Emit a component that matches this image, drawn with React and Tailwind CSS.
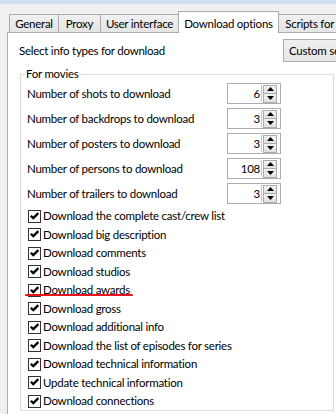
import React from "react";

const tabs = [
  { label: "General", w: "w-[50px]" },
  { label: "Proxy", w: "w-[43px]" },
  { label: "User interface", w: "w-[79px]" },
  { label: "Download options", w: "w-[101px]", active: true },
  { label: "Scripts for movies", w: "w-[100px]" },
];

const spins = [
  { label: "Number of shots to download", value: 6 },
  { label: "Number of backdrops to download", value: 3 },
  { label: "Number of posters to download", value: 3 },
  { label: "Number of persons to download", value: 108 },
  { label: "Number of trailers to download", value: 3 },
];

const checks = [
  "Download the complete cast/crew list",
  "Download big description",
  "Download comments",
  "Download studios",
  "Download awards",
  "Download gross",
  "Download additional info",
  "Download the list of episodes for series",
  "Download technical information",
  "Update technical information",
  "Download connections",
];

function Tick() {
  return (
    <span className="w-[13px] h-[13px] border border-[#333333] bg-white flex items-center justify-center shrink-0">
      <svg width="11" height="11" viewBox="0 0 11 11">
        <path d="M1 5.5 L2.6 3.9 L4.3 5.6 L8.5 1.3 L10.1 2.9 L4.3 8.8 Z" fill="#000" />
      </svg>
    </span>
  );
}

function SpinEdit({ value }) {
  return (
    <div className="w-[54px] h-[21px] border border-[#abadb3] bg-white flex items-center shrink-0">
      <span className="flex-1 text-right pr-[1px] leading-none">{value}</span>
      <span className="w-px h-[17px] bg-[#c8c8c8]" />
      <div className="ml-px mr-[3px] w-[14px] h-[18px] flex flex-col">
        <div className="h-[9px] border border-[#acacac] bg-gradient-to-b from-[#f2f2f2] to-[#e0e0e0] flex items-center justify-center">
          <svg width="7" height="4" viewBox="0 0 7 4">
            <path d="M0 4 L3.5 0 L7 4 Z" fill="#000" />
          </svg>
        </div>
        <div className="h-[9px] border border-t-0 border-[#acacac] bg-gradient-to-b from-[#f2f2f2] to-[#e0e0e0] flex items-center justify-center">
          <svg width="7" height="4" viewBox="0 0 7 4">
            <path d="M0 0 L7 0 L3.5 4 Z" fill="#000" />
          </svg>
        </div>
      </div>
    </div>
  );
}

export default function App() {
  return (
    <div className="w-[336px] h-[414px] overflow-hidden bg-[#f0f0f0] flex flex-col font-['Lato',sans-serif] text-[11.5px] tracking-[-0.25px] text-black">
      <div className="h-[4px] bg-[#cfe0f3] shrink-0" />

      {/* Tabs */}
      <div className="h-[28px] flex items-end pl-[9px] shrink-0">
        {tabs.map((t) =>
          t.active ? (
            <div
              key={t.label}
              className={`${t.w} h-[22px] -mb-px -ml-px relative z-10 bg-white border border-b-0 border-[#acacac] flex items-start justify-center pt-[3px] shrink-0 whitespace-nowrap`}
            >
              {t.label}
            </div>
          ) : (
            <div
              key={t.label}
              className={`${t.w} h-[18px] -ml-px first:ml-0 bg-gradient-to-b from-[#f0f0f0] to-[#e5e5e5] border border-b-0 border-[#acacac] flex items-center justify-center shrink-0 whitespace-nowrap overflow-hidden`}
            >
              {t.label}
            </div>
          )
        )}
      </div>

      {/* Page */}
      <div className="ml-[7px] w-[340px] flex-1 bg-white border-l border-t border-[#acacac] overflow-hidden">
        <div className="w-[328px] flex items-center pt-[6px]">
          <span className="flex-1 pl-[11px]">Select info types for download</span>
          <div className="w-[70px] h-[23px] -mr-[17px] border border-[#acacac] bg-gradient-to-b from-[#f0f0f0] to-[#e5e5e5] flex items-center pl-[5px] whitespace-nowrap overflow-hidden shrink-0">
            Custom selection
          </div>
        </div>

        <fieldset className="ml-[12px] mt-[5px] w-[314px] border border-[#dcdcdc] pl-[6px] pr-2">
          <legend className="px-[1px] -ml-[2px] leading-[14px]">For movies</legend>

          <div className="mt-[2px] flex flex-col gap-[4px]">
            {spins.map((s) => (
              <div key={s.label} className="h-[21px] flex items-center">
                <span className="w-[200px] shrink-0">{s.label}</span>
                <SpinEdit value={s.value} />
              </div>
            ))}
          </div>

          <div className="mt-[2.75px] flex flex-col">
            {checks.map((c) => (
              <div key={c} className="h-[18.5px] flex items-center gap-[2px] pl-[1px] relative">
                <Tick />
                <span className="whitespace-nowrap">{c}</span>
                {c === "Download awards" && (
                  <span className="absolute left-[-2px] top-[13px] w-[108px] h-[2px] bg-[#e8141b] rounded-full" />
                )}
              </div>
            ))}
          </div>
        </fieldset>
      </div>
    </div>
  );
}
